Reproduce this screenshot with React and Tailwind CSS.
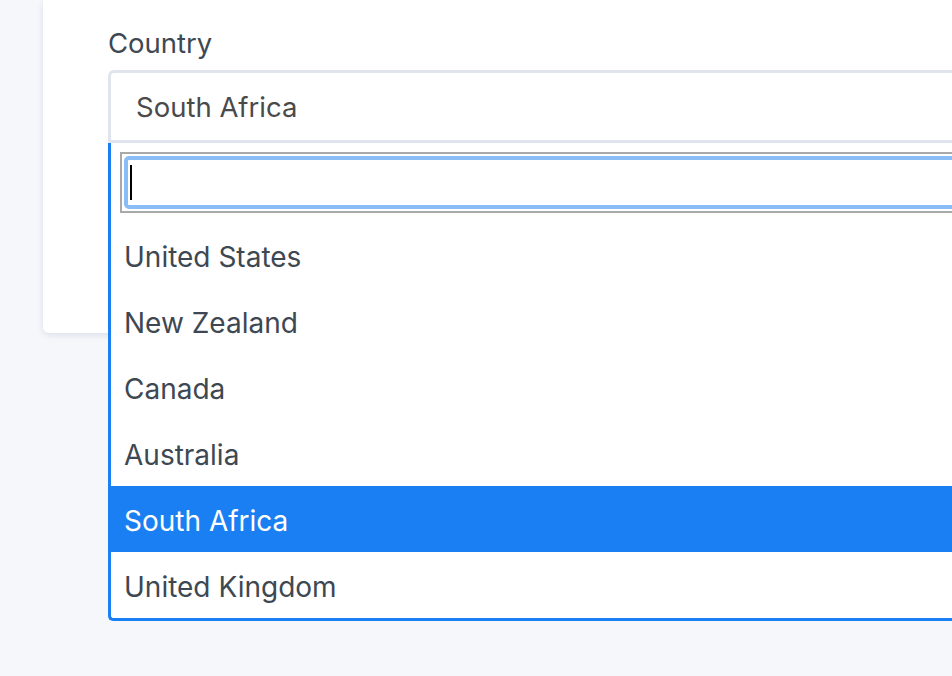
import { useState } from 'react';

const COUNTRIES = ['United States', 'New Zealand', 'Canada', 'Australia', 'South Africa', 'United Kingdom'];

export default function App() {
  const [selected] = useState('South Africa');

  return (
    <div className="h-[676px] w-[952px] overflow-hidden bg-[#f5f7fb] font-['Inter',sans-serif]">
      {/* Card */}
      <div className="ml-[43px] h-[333px] w-[1000px] rounded-bl-[6px] bg-white pl-[65px] pt-[26px] shadow-[0_2px_6px_rgba(30,50,90,0.12)]">
        <label className="block text-[27.5px] leading-[34px] text-[#3d4852]">Country</label>

        <div className="relative mt-[10px]">
          {/* Select box */}
          <div className="flex h-[73px] items-center rounded-t-[6px] border-[3px] border-r-0 border-[#dfe4ed] pl-[25px] pt-[3px] text-[27.5px] text-[#4a4a4a]">
            {selected}
          </div>

          {/* Dropdown */}
          <div className="absolute left-0 top-full z-10 w-[900px] rounded-bl-[5px] border-b-[3px] border-l-[3px] border-[#1a7ff2] bg-white">
            <div className="p-[9px]">
              <div className="h-[61px] border-2 border-[#a9a9a9] p-[2px]">
                <div className="flex h-full items-center rounded-[5px] border-[4px] border-[#8abdf6] pl-[2px]">
                  <span className="h-[35px] w-[2px] bg-black" />
                </div>
              </div>
            </div>
            {COUNTRIES.map((c) => (
              <div
                key={c}
                className={
                  c === selected
                    ? 'flex h-[66px] items-center bg-[#1a7ff2] pl-[13px] pt-[3px] text-[28px] text-white'
                    : 'flex h-[66px] items-center pl-[13px] pt-[3px] text-[28px] text-[#3d4852]'
                }
              >
                {c}
              </div>
            ))}
          </div>
        </div>
      </div>
    </div>
  );
}
